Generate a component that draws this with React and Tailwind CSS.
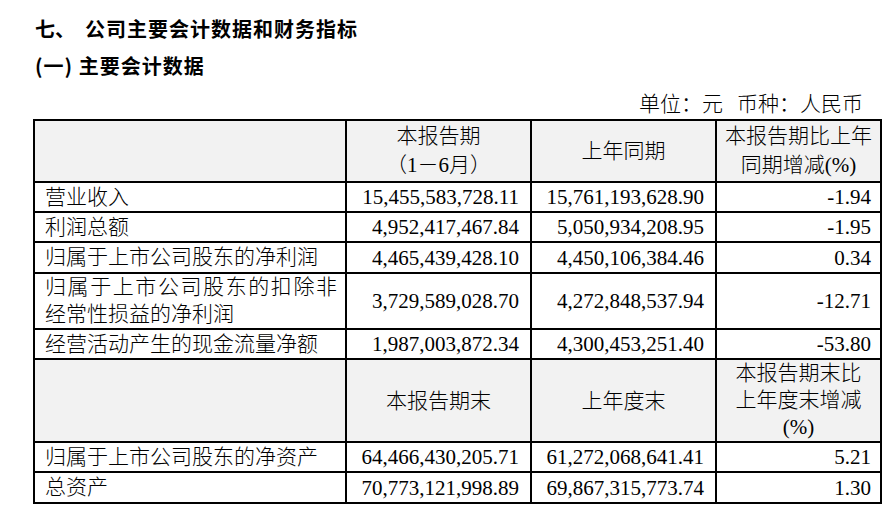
import React from "react";

const rows = [
  { label: "营业收入", a: "15,455,583,728.11", b: "15,761,193,628.90", c: "-1.94", h: "h-[30px]" },
  { label: "利润总额", a: "4,952,417,467.84", b: "5,050,934,208.95", c: "-1.95", h: "h-[30px]" },
  { label: "归属于上市公司股东的净利润", a: "4,465,439,428.10", b: "4,450,106,384.46", c: "0.34", h: "h-[31px]" },
  { label: "归属于上市公司股东的扣除非经常性损益的净利润", a: "3,729,589,028.70", b: "4,272,848,537.94", c: "-12.71", h: "h-[56px]" },
  { label: "经营活动产生的现金流量净额", a: "1,987,003,872.34", b: "4,300,453,251.40", c: "-53.80", h: "h-[30px]" },
];

const rows2 = [
  { label: "归属于上市公司股东的净资产", a: "64,466,430,205.71", b: "61,272,068,641.41", c: "5.21", h: "h-[29px]" },
  { label: "总资产", a: "70,773,121,998.89", b: "69,867,315,773.74", c: "1.30", h: "h-[31px]" },
];

const cell = "border-2 border-black align-middle p-0";

const DataRow = ({ r }) => (
  <tr className={r.h}>
    <td className={`${cell} pl-[10px] pr-[8px] text-justify leading-[27px]`}>{r.label}</td>
    <td className={`${cell} text-right pr-[11px]`}>{r.a}</td>
    <td className={`${cell} text-right pr-[11px]`}>{r.b}</td>
    <td className={`${cell} text-right pr-[9px]`}>{r.c}</td>
  </tr>
);

const App = () => {
  return (
    <div className="w-[894px] h-[510px] bg-white text-black font-['Liberation_Serif','Noto_Sans_CJK_SC',serif] font-light overflow-hidden">
      <div className="pl-[35px] pt-[16px] font-['Noto_Sans_CJK_SC',sans-serif] font-bold text-[20px] leading-[26px]">
        <div className="flex">
          <span>七、</span>
          <span className="ml-[10px] tracking-[1px]">公司主要会计数据和财务指标</span>
        </div>
        <div className="mt-[11px] tracking-[1px]">(一) 主要会计数据</div>
      </div>
      <div className="w-[880px] flex justify-end gap-[14px] pr-[17px] pt-[13px] text-[21px] leading-[24px]">
        <span>单位：元</span>
        <span>币种：人民币</span>
      </div>
      <table className="ml-[33px] mt-[3px] w-[847px] border-collapse border-2 border-black table-fixed text-[21px] leading-[28px]">
        <colgroup>
          <col className="w-[312px]" />
          <col className="w-[185px]" />
          <col className="w-[185px]" />
          <col className="w-[165px]" />
        </colgroup>
        <tbody>
          <tr className="h-[62px] bg-[#f2f2f2]">
            <td className={cell}></td>
            <td className={`${cell} text-center leading-[29px]`}>
              <div>本报告期</div>
              <div>（1－6月）</div>
            </td>
            <td className={`${cell} text-center`}>上年同期</td>
            <td className={`${cell} text-center leading-[29px]`}>
              <div>本报告期比上年</div>
              <div>同期增减(%)</div>
            </td>
          </tr>
          {rows.map((r) => (
            <DataRow key={r.label} r={r} />
          ))}
          <tr className="h-[79px] bg-[#f2f2f2]">
            <td className={cell}></td>
            <td className={`${cell} text-center`}>本报告期末</td>
            <td className={`${cell} text-center`}>上年度末</td>
            <td className={`${cell} text-center leading-[27px]`}>
              <div>本报告期末比</div>
              <div>上年度末增减</div>
              <div>(%)</div>
            </td>
          </tr>
          {rows2.map((r) => (
            <DataRow key={r.label} r={r} />
          ))}
        </tbody>
      </table>
    </div>
  );
};

export default App;
